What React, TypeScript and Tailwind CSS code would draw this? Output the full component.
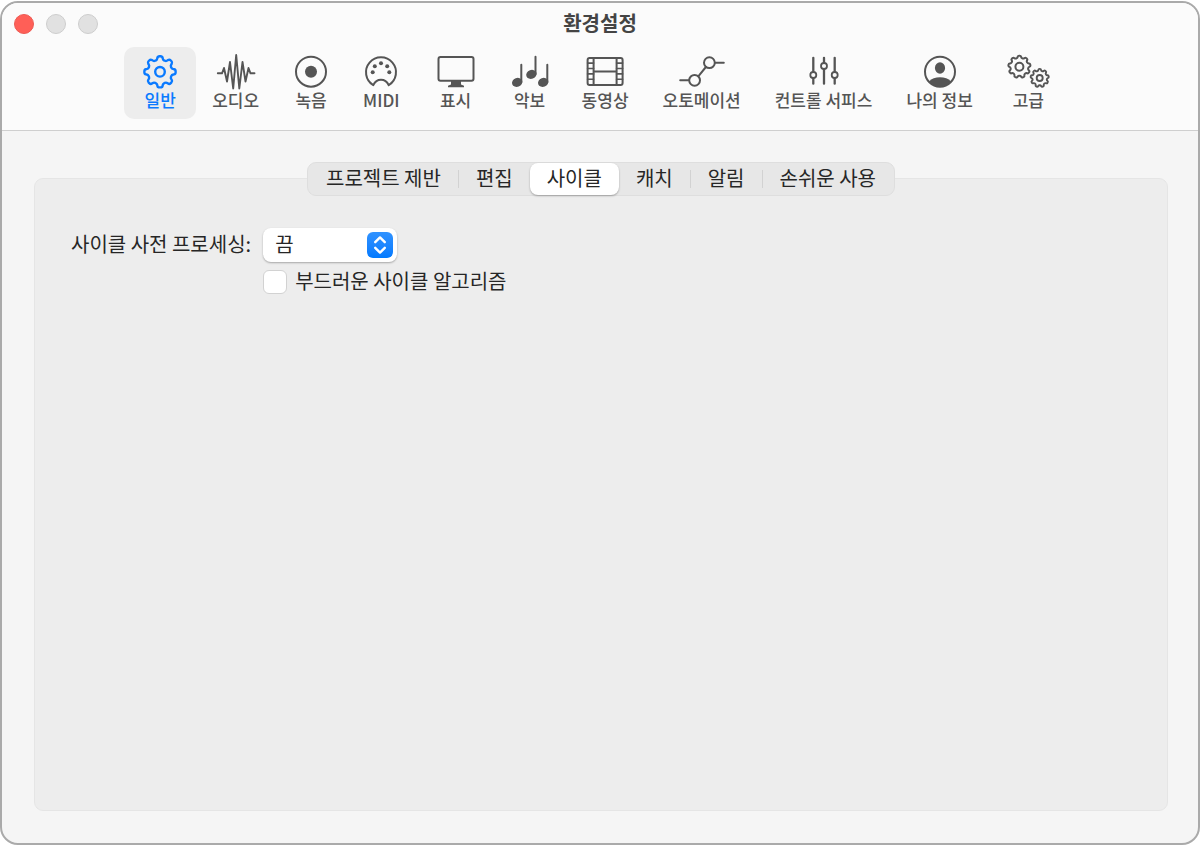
import React, { useState } from 'react';

// Outline of a cog: each tooth is four points, with the corners softened
const gearPath = (cx: number, cy: number, outer: number, inner: number, teeth: number) => {
  const points: number[][] = [];
  const step = (Math.PI * 2) / teeth;
  for (let i = 0; i < teeth; i++) {
    const a = i * step - Math.PI / 2;
    [[-0.31, inner], [-0.19, outer], [0.19, outer], [0.31, inner]].forEach(([k, r]) => {
      points.push([cx + r * Math.cos(a + k * step), cy + r * Math.sin(a + k * step)]);
    });
  }
  const toward = (p: number[], q: number[], t: number) =>
    `${(p[0] + (q[0] - p[0]) * t).toFixed(2)} ${(p[1] + (q[1] - p[1]) * t).toFixed(2)}`;
  return (
    points
      .map((p, i) => {
        const prev = points[(i + points.length - 1) % points.length];
        const next = points[(i + 1) % points.length];
        return `${i === 0 ? 'M' : 'L'}${toward(p, prev, 0.42)}Q${p[0].toFixed(2)} ${p[1].toFixed(2)} ${toward(p, next, 0.42)}`;
      })
      .join('') + 'Z'
  );
};

const Icon = ({ width, children }: { width: number; children: React.ReactNode }) => (
  <svg
    width={width}
    height={34}
    viewBox={`0 0 ${width} 34`}
    fill="none"
    stroke="currentColor"
    strokeWidth={2}
    strokeLinecap="round"
    strokeLinejoin="round"
    className="overflow-visible"
    aria-hidden="true"
  >
    {children}
  </svg>
);

const GeneralIcon = () => (
  <Icon width={36}>
    <path d={gearPath(18, 16.8, 15.8, 12.2, 8)} strokeWidth={2.4} />
    <circle cx="18" cy="16.8" r="4.8" strokeWidth={2.4} />
  </Icon>
);

const AudioIcon = () => (
  <Icon width={38}>
    <path
      d="M.8 18.3H5L7 13l3 13.5L13 7l3.2 26.5L19.2 0l3.1 33.5L25.5 7l3 19.5 3-13.5 2 5.3h4"
      strokeWidth={1.9}
    />
  </Icon>
);

const RecordIcon = () => (
  <Icon width={36}>
    <circle cx="18" cy="16.7" r="15" />
    <circle cx="18" cy="16.7" r="6" fill="currentColor" stroke="none" />
  </Icon>
);

const MidiIcon = () => (
  <Icon width={36}>
    <path d="M10.3 30.2A15 15 0 1 1 25.7 30.2C24 26.5 21.5 24.8 18 24.8S12 26.5 10.3 30.2Z" />
    <g fill="currentColor" stroke="none">
      <circle cx="18" cy="8.3" r="2" />
      <circle cx="11.8" cy="11.3" r="2" />
      <circle cx="24.2" cy="11.3" r="2" />
      <circle cx="9.7" cy="17.3" r="2" />
      <circle cx="26.3" cy="17.3" r="2" />
    </g>
  </Icon>
);

const DisplayIcon = () => (
  <Icon width={44}>
    <rect x="4.5" y="2" width="35" height="23.7" rx="2" />
    <path d="M17 26h10v3.5l3 1.2v1.6H14v-1.6l3-1.2z" fill="currentColor" stroke="none" />
  </Icon>
);

const ScoreIcon = () => (
  <Icon width={36}>
    <path d="M9.3 27V9.7M23.5 19V1.7M35.3 27V9.7" />
    <g fill="currentColor" stroke="none">
      <ellipse cx="5.2" cy="27.4" rx="5.3" ry="4.4" transform="rotate(-20 5.2 27.4)" />
      <ellipse cx="19.4" cy="19.4" rx="5.3" ry="4.4" transform="rotate(-20 19.4 19.4)" />
      <ellipse cx="31.2" cy="27.4" rx="5.3" ry="4.4" transform="rotate(-20 31.2 27.4)" />
    </g>
  </Icon>
);

const MovieIcon = () => (
  <Icon width={38}>
    <rect x="1.6" y="3" width="35" height="27" rx="2" />
    <path d="M7.6 3v27M30.6 3v27M7.6 16.5h23" />
    <path
      d="M1.6 8.1h6M1.6 13.5h6M1.6 18.9h6M1.6 24.3h6M30.6 8.1h6M30.6 13.5h6M30.6 18.9h6M30.6 24.3h6"
      strokeWidth={1.6}
    />
  </Icon>
);

const AutomationIcon = () => (
  <Icon width={46}>
    <path d="M1.2 25.3h8.6M36 7.7h8.8M19.3 21.3l7.6-9.3" />
    <circle cx="15.6" cy="25.3" r="5.4" />
    <circle cx="30.4" cy="7.7" r="5.4" />
  </Icon>
);

const SurfacesIcon = () => (
  <Icon width={36}>
    <path d="M7.3 2.8v13.8M7.3 23.2v5.5M18 2.8v5M18 14.3v14.4M28.7 2.8v13.8M28.7 23.2v5.5" strokeWidth={2.3} />
    <circle cx="7.3" cy="20" r="3" strokeWidth={1.8} />
    <circle cx="18" cy="11" r="3" strokeWidth={1.8} />
    <circle cx="28.7" cy="20" r="3" strokeWidth={1.8} />
  </Icon>
);

const ProfileIcon = () => (
  <Icon width={36}>
    <circle cx="18" cy="16.7" r="15" />
    <ellipse cx="18" cy="13" rx="5.1" ry="5.8" fill="currentColor" stroke="none" />
    <path d="M7 26.5c2.5-3 6.5-4.3 11-4.3s8.5 1.3 11 4.3a15 15 0 0 1-22 0z" fill="currentColor" stroke="none" />
  </Icon>
);

const AdvancedIcon = () => (
  <Icon width={43}>
    <path d={gearPath(12.4, 11.8, 11.2, 9, 9)} strokeWidth={2} />
    <circle cx="12.4" cy="11.8" r="4" strokeWidth={2} />
    <path d={gearPath(32.7, 23, 9.2, 7.3, 9)} strokeWidth={1.9} />
    <circle cx="32.7" cy="23" r="3" strokeWidth={1.9} />
  </Icon>
);

const sections = [
  { label: '일반', icon: GeneralIcon },
  { label: '오디오', icon: AudioIcon },
  { label: '녹음', icon: RecordIcon },
  { label: 'MIDI', icon: MidiIcon },
  { label: '표시', icon: DisplayIcon },
  { label: '악보', icon: ScoreIcon },
  { label: '동영상', icon: MovieIcon },
  { label: '오토메이션', icon: AutomationIcon },
  { label: '컨트롤 서피스', icon: SurfacesIcon },
  { label: '나의 정보', icon: ProfileIcon },
  { label: '고급', icon: AdvancedIcon },
];

const tabs = ['프로젝트 제반', '편집', '사이클', '캐치', '알림', '손쉬운 사용'];

const Chevrons = () => (
  <svg viewBox="0 0 26 26" className="size-full" fill="none" aria-hidden="true">
    <path
      d="M8.2 10.2L13 5.4l4.8 4.8M8.2 15.8l4.8 4.8 4.8-4.8"
      stroke="white"
      strokeWidth={2.4}
      strokeLinecap="round"
      strokeLinejoin="round"
    />
  </svg>
);

const TitleBar = () => (
  <div className="grid h-[42px] grid-cols-[1fr_auto_1fr] items-center px-3">
    <div className="flex gap-3">
      <button aria-label="닫기" className="size-5 rounded-full border border-[#ec5a53] bg-[#ff5f57]" />
      <button aria-label="최소화" className="size-5 rounded-full border border-[#cdcdcd] bg-[#e1e1e1]" />
      <button aria-label="확대" className="size-5 rounded-full border border-[#cdcdcd] bg-[#e1e1e1]" />
    </div>
    <h1 className="pb-0.5 text-xl leading-6 font-bold text-[#444444]">환경설정</h1>
  </div>
);

const Toolbar = () => {
  const [section, setSection] = useState('일반');

  return (
    <nav className="flex justify-center -space-x-0.5 pt-0.5 pr-2 pb-[11px]">
      {sections.map(({ label, icon: SectionIcon }) => (
        <button
          key={label}
          onClick={() => setSection(label)}
          className={`flex flex-col items-center gap-px rounded-[10px] px-[18px] pt-2 pb-[9px] ${
            section === label ? 'bg-[#ededed] text-[#0a7aff]' : 'text-[#555555]'
          }`}
        >
          <SectionIcon />
          <span className="text-[17px] leading-5 font-medium whitespace-nowrap">{label}</span>
        </button>
      ))}
    </nav>
  );
};

const TabBar = ({ active, onChange }: { active: string; onChange: (tab: string) => void }) => (
  <div role="tablist" className="z-10 flex rounded-[9px] border border-[#dedede] bg-[#e7e7e7] px-px">
    {tabs.map((tab, index) => {
      const selected = tab === active;
      const divided = index > 0 && !selected && tabs[index - 1] !== active;
      return (
        <React.Fragment key={tab}>
          {divided && <span className="my-[7px] w-px bg-[#d2d2d2]" />}
          <button
            role="tab"
            aria-selected={selected}
            onClick={() => onChange(tab)}
            className={`h-8 rounded-lg px-[17px] pb-0.5 text-xl leading-7 whitespace-nowrap ${
              selected ? 'bg-white shadow-[0_1px_2px_rgba(0,0,0,0.3)]' : ''
            }`}
          >
            {tab}
          </button>
        </React.Fragment>
      );
    })}
  </div>
);

const CycleSettings = () => (
  <div className="grid grid-cols-[auto_1fr] items-center gap-x-3 gap-y-2 text-xl leading-8">
    <label htmlFor="preprocessing" className="pb-0.5">사이클 사전 프로세싱:</label>
    <div className="relative w-[134px]">
      <select
        id="preprocessing"
        className="h-[34px] w-full appearance-none rounded-lg bg-white pr-8 pb-0.5 pl-3 shadow-[0_1px_2px_rgba(0,0,0,0.3)]"
      >
        <option>끔</option>
      </select>
      <span className="pointer-events-none absolute top-1 right-1 size-[26px] rounded-md bg-linear-to-b from-[#2f92ff] to-[#007aff]">
        <Chevrons />
      </span>
    </div>
    <div className="col-start-2 flex h-6 items-center gap-2">
      <input
        id="smooth-cycle"
        type="checkbox"
        className="size-6 appearance-none rounded-md border border-[#d2d2d2] bg-white checked:bg-[#007aff]"
      />
      <label htmlFor="smooth-cycle" className="pb-0.5">부드러운 사이클 알고리즘</label>
    </div>
  </div>
);

const App = () => {
  const [tab, setTab] = useState('사이클');

  return (
    <div className="flex min-h-screen bg-white pt-px pr-0.5 pb-px font-['Noto_Sans_CJK_KR',sans-serif] text-[#262626]">
      <div className="flex flex-1 flex-col overflow-hidden rounded-[18px] border-2 border-[#aaaaaa] bg-[#f5f5f5]">
        <header className="border-b border-[#cfcfcf] bg-[#fbfbfb]">
          <TitleBar />
          <Toolbar />
        </header>
        <main className="flex flex-1 flex-col items-center pt-[31px] pr-[30px] pb-8 pl-8">
          <TabBar active={tab} onChange={setTab} />
          <section className="-mt-[18px] w-full flex-1 rounded-[9px] border border-[#e5e5e5] bg-[#ededed] px-9 pt-[49px]">
            {tab === '사이클' && <CycleSettings />}
          </section>
        </main>
      </div>
    </div>
  );
};

export default App;
